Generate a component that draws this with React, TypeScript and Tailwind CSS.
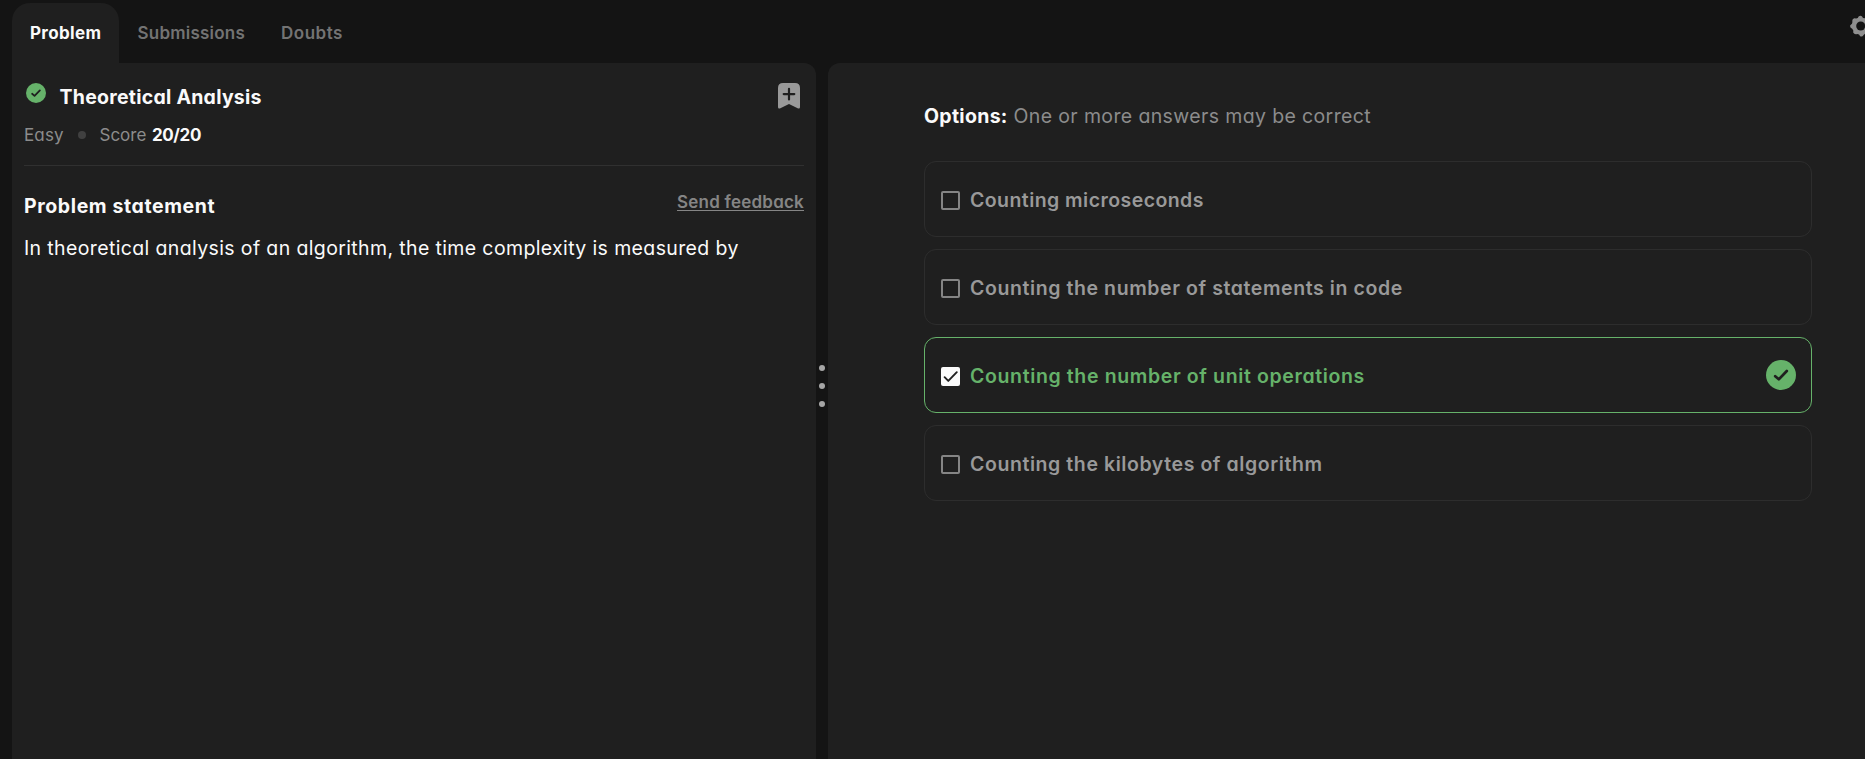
function CheckBadge({ className }: { className: string }) {
  return (
    <svg viewBox="0 0 30 30" className={className} aria-hidden="true">
      <circle cx="15" cy="15" r="15" fill="#66b26a" />
      <path d="M9.2 16.2 L12.8 19.3 L20.8 11" fill="none" stroke="#1f1f1f" strokeWidth="2.7" strokeLinecap="round" strokeLinejoin="round" />
    </svg>
  );
}

function BookmarkIcon() {
  return (
    <svg viewBox="0 0 22 26" className="h-[26px] w-[22px]" aria-hidden="true">
      <path d="M5 0H17Q22 0 22 5V24Q22 26.4 19.6 25.2L11 21L2.4 25.2Q0 26.4 0 24V5Q0 0 5 0Z" fill="#999999" />
      <path d="M11 5.8V16.4M5.7 11.1H16.3" stroke="#1f1f1f" strokeWidth="2.2" strokeLinecap="round" />
    </svg>
  );
}

function GearIcon() {
  return (
    <svg viewBox="0 0 22 22" className="h-[22px] w-[22px] shrink-0" aria-hidden="true">
      <path
        d="M8.6 1.6Q10.4 -0.2 12.1 1.5L13 3.1L15 3.3Q17.8 2.7 18.8 5.2L18.6 7.2L19.8 8.8Q22 10.2 21 12.3L19.6 13.6L19.1 15.4Q19.2 18.2 17 18.9L15 18.8L13.6 19.9Q12.4 22 10.2 21.2L9 19.6L7.2 18.9Q4.4 19.8 3.2 17.5L3.3 15.4L2.2 13.8Q-0.5 12.6 0.3 10.2L2 8.7L2.4 6.9Q1.8 4.1 4.2 3.2L6.2 3.4L7.8 2.9Z"
        fill="#8f8f8f"
      />
      <circle cx="10.7" cy="11" r="4.5" fill="#141414" />
    </svg>
  );
}

function Checkbox({ checked }: { checked?: boolean }) {
  if (!checked) {
    return <span className="mt-[5px] size-[19px] shrink-0 rounded-[2px] border-2 border-[#858585]" />;
  }
  return (
    <span className="mt-[5px] size-[19px] shrink-0 rounded-[2px] bg-[#fafafa]">
      <svg viewBox="0 0 19 19" className="size-[19px]" aria-hidden="true">
        <path d="M3.6 10.2L7.3 13.9L15.8 5.2" fill="none" stroke="#1f1f1f" strokeWidth="1.9" strokeLinecap="round" strokeLinejoin="round" />
      </svg>
    </span>
  );
}

const options = [
  { text: "Counting microseconds", spacing: "tracking-[0.44px]" },
  { text: "Counting the number of statements in code", spacing: "tracking-[0.59px]" },
  { text: "Counting the number of unit operations", spacing: "tracking-[0.63px]", checked: true },
  { text: "Counting the kilobytes of algorithm", spacing: "tracking-[0.58px]" },
];

function Option({ text, spacing, checked }: { text: string; spacing: string; checked?: boolean }) {
  return (
    <li
      className={`flex h-[76px] items-start rounded-xl border px-4 pt-6 ${
        checked ? "border-[#66b26a] text-[#66b26a]" : "border-[#2d2d2d] text-[#999999]"
      }`}
    >
      <Checkbox checked={checked} />
      <span className={`ml-[10px] flex-1 text-[19.5px] leading-7 font-semibold ${spacing}`}>{text}</span>
      {checked && <CheckBadge className="-mt-0.5 -mr-px size-[30px]" />}
    </li>
  );
}

export default function App() {
  return (
    <div className="flex h-[759px] flex-col overflow-hidden bg-[#141414] font-['Inter',sans-serif] text-[#fafafa] [font-feature-settings:'cv11']">
      <header className="flex h-[63px] shrink-0 justify-between pt-[3px] pl-3">
        <nav className="flex text-[17px] leading-6 font-semibold text-[#737373]">
          <div className="w-[107px] rounded-t-[18px] bg-[#1f1f1f] pt-[18px] pl-[18px] font-bold tracking-[0.35px] text-[#fafafa]">Problem</div>
          <div className="w-[143px] pt-[18px] pl-[18.5px] tracking-[0.22px]">Submissions</div>
          <div className="pt-[18px] pl-[19px] tracking-[0.5px]">Doubts</div>
        </nav>
        <div className="w-[15px] overflow-hidden pt-3">
          <GearIcon />
        </div>
      </header>

      <main className="flex min-h-0 flex-1 pl-3">
        <section className="w-[804px] shrink-0 rounded-tr-xl bg-[#1f1f1f] px-3 pt-5">
          <div className="flex h-[83px] flex-col border-b border-[#303030]">
            <div className="flex h-10 items-start">
              <CheckBadge className="ml-[2px] size-5" />
              <h1 className="ml-[13.5px] flex-1 text-[19.5px] leading-7 font-bold tracking-[0.25px]">Theoretical Analysis</h1>
              <div className="mr-[4px]">
                <BookmarkIcon />
              </div>
            </div>
            <div className="flex items-center text-[17px] leading-6 text-[#8c8c8c]">
              <span className="w-[54px] tracking-[0.15px]">Easy</span>
              <span className="size-2 rounded-full bg-[#404040]" />
              <span className="ml-[13.5px] w-[52.5px]">Score</span>
              <span className="font-bold tracking-[-0.4px] text-[#fafafa]">20/20</span>
            </div>
          </div>
          <div className="mt-6 flex h-[44px] items-start justify-between">
            <h2 className="mt-0.5 text-[19.5px] leading-7 font-bold tracking-[0.6px]">Problem statement</h2>
            <a className="text-[17px] leading-6 font-semibold tracking-[0.22px] text-[#858585] underline decoration-1 underline-offset-2">Send feedback</a>
          </div>
          <p className="text-[19.5px] leading-7 tracking-[0.37px] whitespace-nowrap">
            In theoretical analysis of an algorithm, the time complexity is measured by
          </p>
        </section>

        <div className="flex w-3 shrink-0 flex-col items-center gap-3 pt-[302px]">
          <span className="size-[6px] rounded-full bg-[#a6a6a6]" />
          <span className="size-[6px] rounded-full bg-[#a6a6a6]" />
          <span className="size-[6px] rounded-full bg-[#a6a6a6]" />
        </div>

        <section className="flex-1 rounded-tl-xl bg-[#1f1f1f] pt-[39px] pr-[53px] pl-24">
          <p className="flex text-[19.5px] leading-7 text-[#8c8c8c]">
            <span className="w-[89.5px] font-bold tracking-[0.3px] text-[#fafafa]">Options:</span>
            <span className="tracking-[0.37px]">One or more answers may be correct</span>
          </p>
          <ul className="mt-[31px] flex flex-col gap-3">
            {options.map((o) => (
              <Option key={o.text} {...o} />
            ))}
          </ul>
        </section>
      </main>
    </div>
  );
}
